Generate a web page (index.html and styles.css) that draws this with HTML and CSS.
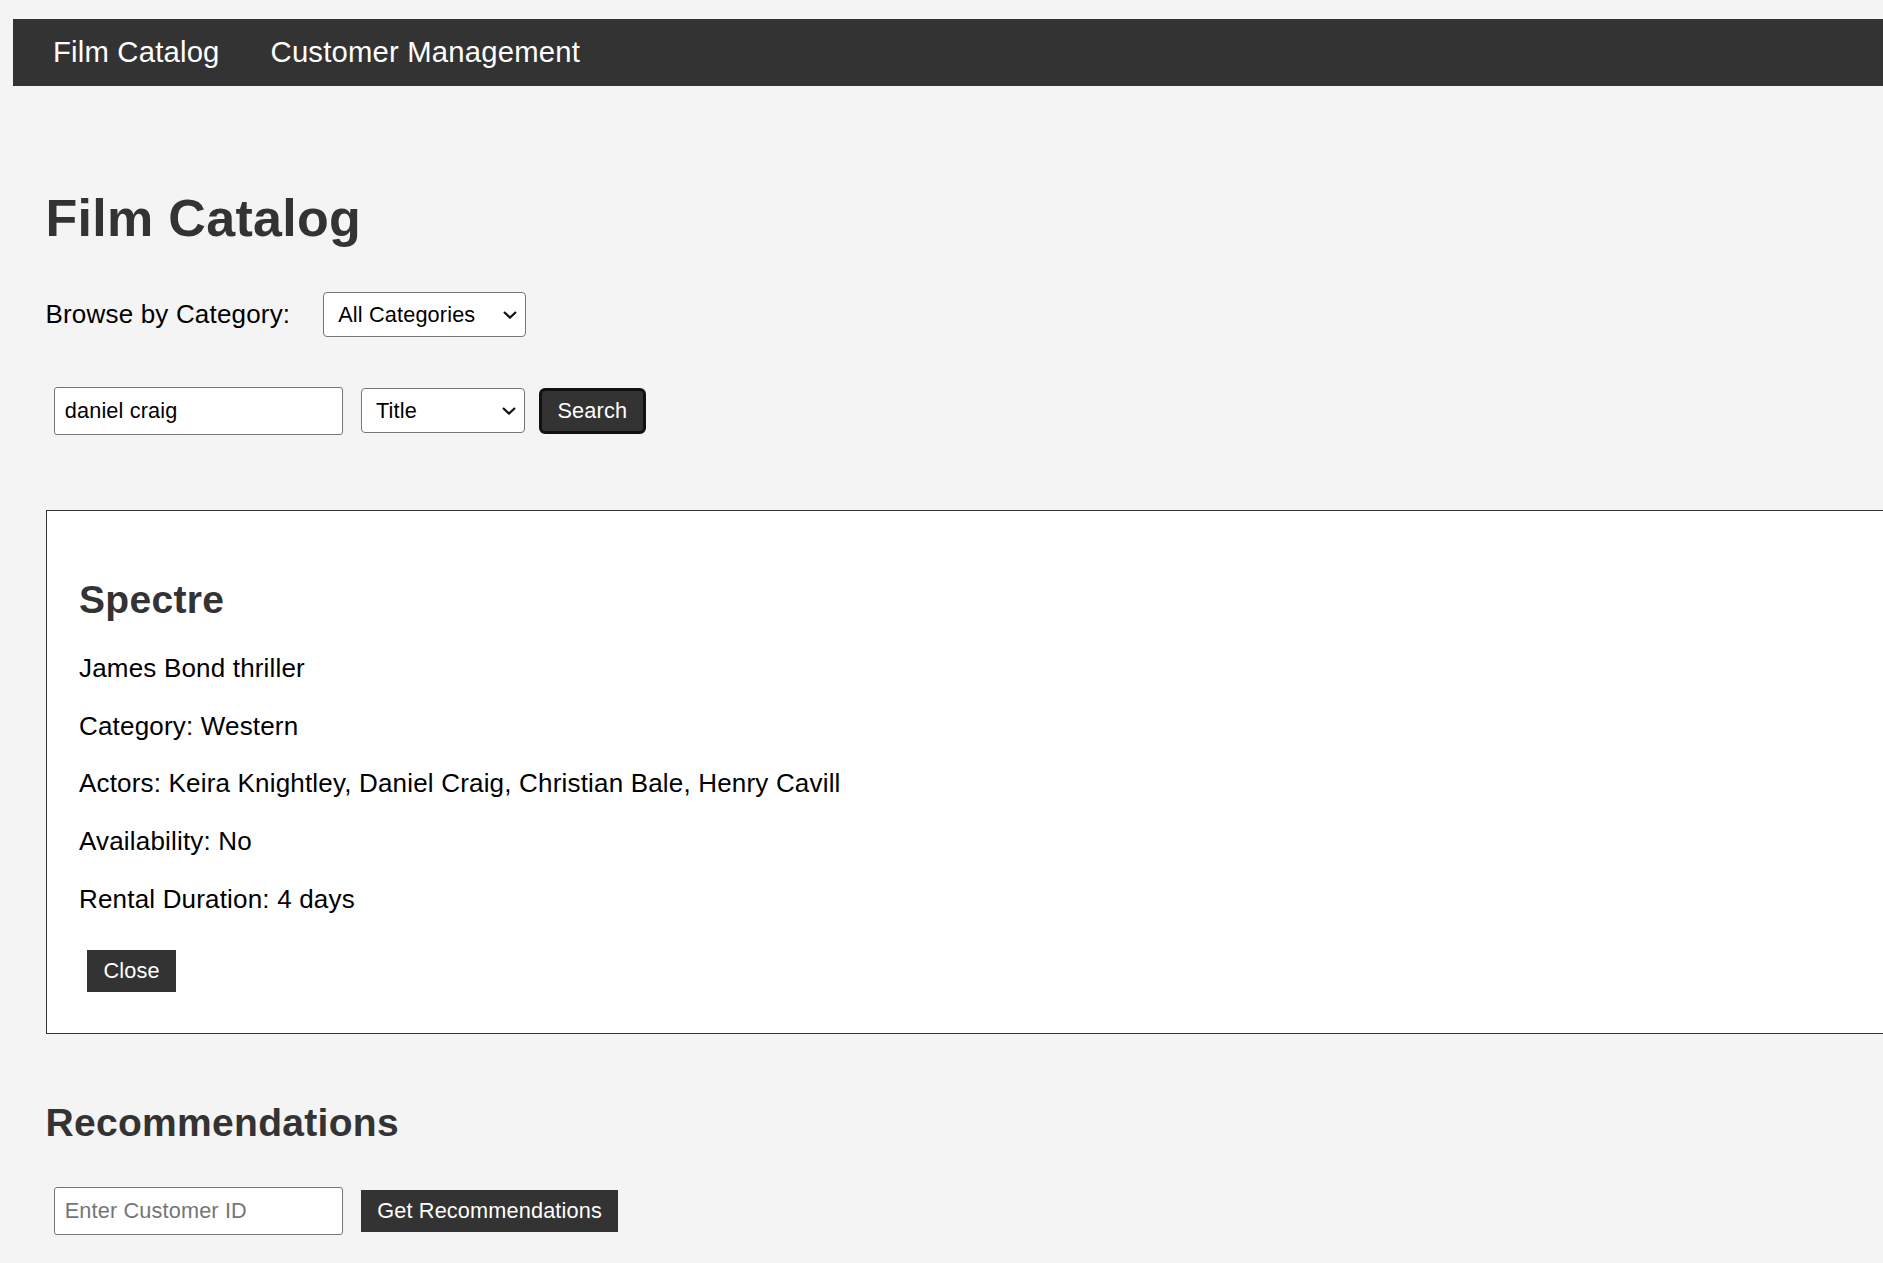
FILE: index.html
```html
<!DOCTYPE html>
<html lang="en">
<head>
<meta charset="utf-8">
<title>Film Catalog</title>
<link rel="stylesheet" href="styles.css">
</head>
<body>
<div class="page">
  <nav class="topnav">
    <a class="nav-link" href="#">Film Catalog</a>
    <a class="nav-link" href="#">Customer Management</a>
  </nav>
  <main class="main">
    <h1 class="page-title">Film Catalog</h1>
    <div class="browse-row">
      <label class="browse-label" for="cat">Browse by Category:</label>
      <span class="select-wrap select-wrap-cat">
        <select id="cat" class="select select-cat">
          <option>All Categories</option>
        </select>
        <svg class="chev" width="14" height="8" viewBox="0 0 14 8"><polyline points="1,1 7,6.6 13,1" fill="none" stroke="#111" stroke-width="2.2"/></svg>
      </span>
    </div>
    <div class="search-row">
      <input class="text-input" type="text" value="daniel craig">
      <span class="select-wrap select-wrap-type">
        <select class="select select-type">
          <option>Title</option>
        </select>
        <svg class="chev" width="14" height="8" viewBox="0 0 14 8"><polyline points="1,1 7,6.6 13,1" fill="none" stroke="#111" stroke-width="2.2"/></svg>
      </span>
      <button class="btn btn-search" type="button">Search</button>
    </div>
    <section class="card">
      <h2 class="card-title">Spectre</h2>
      <p class="card-line">James Bond thriller</p>
      <p class="card-line">Category: Western</p>
      <p class="card-line">Actors: Keira Knightley, Daniel Craig, Christian Bale, Henry Cavill</p>
      <p class="card-line">Availability: No</p>
      <p class="card-line">Rental Duration: 4 days</p>
      <div class="card-actions">
        <button class="btn btn-flat" type="button">Close</button>
      </div>
    </section>
    <h2 class="rec-title">Recommendations</h2>
    <div class="rec-row">
      <input class="text-input" type="text" placeholder="Enter Customer ID">
      <button class="btn btn-flat" type="button">Get Recommendations</button>
    </div>
  </main>
</div>
</body>
</html>
```

FILE: styles.css
```css
html {
  overflow: hidden;
}
body {
  margin: 0;
  background: #f4f4f4;
  font-family: "Liberation Sans", Arial, sans-serif;
  color: #000;
}
.page {
  width: 2000px;
  padding: 19px 0 0 13px;
}
.topnav {
  height: 67px;
  background: #333;
  display: flex;
  align-items: center;
  padding-left: 40px;
  gap: 51px;
}
.nav-link {
  color: #fff;
  text-decoration: none;
  font-size: 29.25px;
  letter-spacing: 0.2px;
}
.main {
  padding: 0 32.5px;
}
.page-title {
  margin: 101.8px 0 44.2px;
  font-size: 52px;
  line-height: 60px;
  color: #333;
  font-weight: bold;
  letter-spacing: 0.3px;
}
.browse-row {
  display: flex;
  align-items: center;
  height: 45px;
  margin-bottom: 50px;
}
.browse-label {
  font-size: 26px;
  line-height: 30px;
  letter-spacing: 0.18px;
}
.select-wrap {
  position: relative;
  display: inline-flex;
}
.select-wrap-cat {
  margin-left: 33px;
}
.select-wrap-type {
  margin: 0 6px 0 10px;
}
.select {
  appearance: none;
  -webkit-appearance: none;
  box-sizing: border-box;
  height: 45px;
  border: 1px solid #767676;
  border-radius: 4px;
  background: #fff;
  font-family: "Liberation Sans", Arial, sans-serif;
  font-size: 21.7px;
  color: #000;
  padding: 0 30px 0 14px;
  letter-spacing: 0.15px;
}
.select-cat {
  width: 203px;
}
.select-type {
  width: 164px;
}
.chev {
  position: absolute;
  right: 9px;
  top: 19px;
  pointer-events: none;
}
.search-row,
.rec-row {
  display: flex;
  align-items: center;
  height: 48px;
}
.text-input {
  box-sizing: border-box;
  width: 289px;
  height: 48px;
  margin: 0 8.25px;
  border: 1px solid #767676;
  border-radius: 3px;
  background: #fff;
  padding: 0 10px;
  font-family: "Liberation Sans", Arial, sans-serif;
  font-size: 21.7px;
  color: #000;
  letter-spacing: 0.15px;
}
.text-input::placeholder {
  color: #757575;
}
.btn {
  font-family: "Liberation Sans", Arial, sans-serif;
  font-size: 21.7px;
  color: #fff;
  background: #333;
  cursor: pointer;
  letter-spacing: 0.15px;
}
.btn-search {
  box-sizing: border-box;
  height: 46px;
  margin: 0 8.25px 0 8px;
  padding: 0 15.5px;
  border: 3px solid #111;
  border-radius: 6px;
}
.btn-flat {
  border: 0;
  border-radius: 0;
  margin: 8.25px;
  padding: 8.5px 16.25px;
  line-height: 25px;
}
.card {
  margin-top: 75px;
  background: #fff;
  border: 1px solid #333;
  padding: 32.5px;
}
.card-title {
  margin: 33.2px 0 31.3px;
  font-size: 39px;
  line-height: 45px;
  color: #333;
  letter-spacing: 0.3px;
}
.card-line {
  margin: 27.75px 0;
  font-size: 26px;
  line-height: 30px;
  letter-spacing: 0.18px;
}
.card-actions {
  display: flex;
}
.card-actions .btn-flat {
  margin: 8.25px;
}
.rec-title {
  margin: 66px 0 42.2px;
  font-size: 39px;
  line-height: 45px;
  color: #333;
  letter-spacing: 0.3px;
}
.rec-row {
  height: 48px;
}
.rec-row .btn-flat {
  margin: 0 8.25px 0 10px;
}
```
